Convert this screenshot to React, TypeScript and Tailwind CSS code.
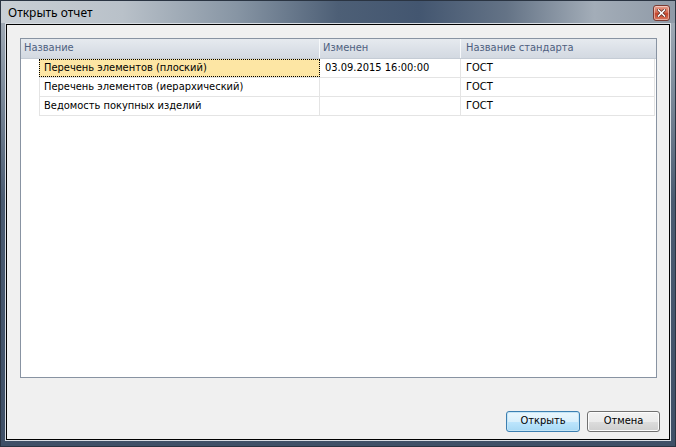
import React from "react";

const tfont = { fontFamily: '"DejaVu Sans Condensed", "DejaVu Sans", sans-serif' };

function CloseButton() {
  return (
    <div className="mr-[5px] mt-[4px] flex h-[16px] w-[17px] items-center justify-center rounded-[3px] border border-[#7a3b33] bg-[linear-gradient(to_bottom,#e8a08f_0%,#d56a52_45%,#c4442c_55%,#d9765c_100%)] shadow-[inset_0_0_0_1px_rgba(255,255,255,0.45)]">
      <svg width="9" height="8" viewBox="0 0 9 8">
        <path d="M1.5 1 L7.5 7 M7.5 1 L1.5 7" stroke="#5a2a22" strokeWidth="3" strokeLinecap="square" />
        <path d="M1.5 1 L7.5 7 M7.5 1 L1.5 7" stroke="#ffffff" strokeWidth="1.6" strokeLinecap="square" />
      </svg>
    </div>
  );
}

type Row = { name: string; date: string; std: string; selected?: boolean };
const rows: Row[] = [
  { name: "Перечень элементов (плоский)", date: "03.09.2015 16:00:00", std: "ГОСТ", selected: true },
  { name: "Перечень элементов (иерархический)", date: "", std: "ГОСТ" },
  { name: "Ведомость покупных изделий", date: "", std: "ГОСТ" },
];

export default function App() {
  return (
    <div className="h-[447px] w-[676px] overflow-hidden border border-[#2a3442] bg-[linear-gradient(to_bottom,#aab3bd_0%,#7d8b9b_20%,#4a5b71_45%,#3f5067_100%)] flex flex-col">
      {/* Title bar */}
      <div className="flex h-[22px] shrink-0 items-start justify-between bg-[linear-gradient(to_right,#c9cfd5_0%,#b9c1c9_18%,#8795a4_35%,#4d5f76_50%,#435670_62%,#647386_75%,#a3adb8_88%,#8f9aa7_100%)]">
        <div className="pl-[7px] pt-[4px] text-[12px] leading-[15px] text-black" style={{ fontFamily: '"Noto Sans", "Open Sans", sans-serif' }}>
          Открыть отчет
        </div>
        <CloseButton />
      </div>
      {/* Body frame */}
      <div className="flex flex-1 flex-col px-[4px] pb-[5px]">
        <div className="flex flex-1 flex-col border border-[#d9dee4]">
          <div className="flex flex-1 flex-col border border-black bg-[#f0f0f0] pl-[13px] pr-[9px] pt-[13px] pb-[7px]" style={tfont}>
            {/* Table */}
            <div className="mr-[3px] h-[340px] border border-[#8893a2] bg-white text-[11px] text-black">
              {/* header */}
              <div className="flex h-[20px] items-stretch border-b border-[#c5ccd5] bg-[linear-gradient(to_bottom,#e6eaef_0%,#dce1e8_50%,#d3d9e1_100%)] text-[#4e6080]">
                <div className="flex w-[299px] items-center border-r border-[#f7f9fb] pl-[3px] pb-[1px]">Название</div>
                <div className="flex w-[141px] items-center border-r border-[#f7f9fb] pl-[3px] pb-[1px]">Изменен</div>
                <div className="flex w-[194px] items-center pl-[5px] pb-[1px]">Название стандарта</div>
              </div>
              {rows.map((r) => (
                <div key={r.name} className="flex h-[19px] items-stretch">
                  <div className="w-[18px] shrink-0" />
                  <div className="flex w-[616px] items-stretch border-b border-[#e4e4e4]">
                    <div
                      className={
                        "flex w-[281px] items-center pl-[4px] " +
                        (r.selected
                          ? "border border-dotted border-black bg-[#fde6a4]"
                          : "border-l border-r border-l-[#e4e4e4] border-r-[#e4e4e4]")
                      }
                    >
                      {r.name}
                    </div>
                    <div className="flex w-[141px] items-center border-r border-[#e4e4e4] pl-[5px]">{r.date}</div>
                    <div className="flex w-[194px] items-center border-r border-[#e4e4e4] pl-[5px]">{r.std}</div>
                  </div>
                </div>
              ))}
            </div>
            {/* Buttons */}
            <div className="mt-auto flex justify-end gap-[7px] text-[11px]">
              <button className="flex h-[21px] w-[74px] items-center justify-center rounded-[3px] border border-[#3c7fb1] bg-[linear-gradient(to_bottom,#eaf6fd_0%,#d9f0fc_50%,#bee6fd_51%,#a7d9f5_100%)] shadow-[inset_0_0_0_1px_#c4e5f6]">
                Открыть
              </button>
              <button className="flex h-[21px] w-[73px] items-center justify-center rounded-[3px] border border-[#707070] bg-[linear-gradient(to_bottom,#f2f2f2_0%,#ebebeb_50%,#dddddd_51%,#cfcfcf_100%)] shadow-[inset_0_0_0_1px_#fcfcfc]">
                Отмена
              </button>
            </div>
          </div>
        </div>
      </div>
    </div>
  );
}
